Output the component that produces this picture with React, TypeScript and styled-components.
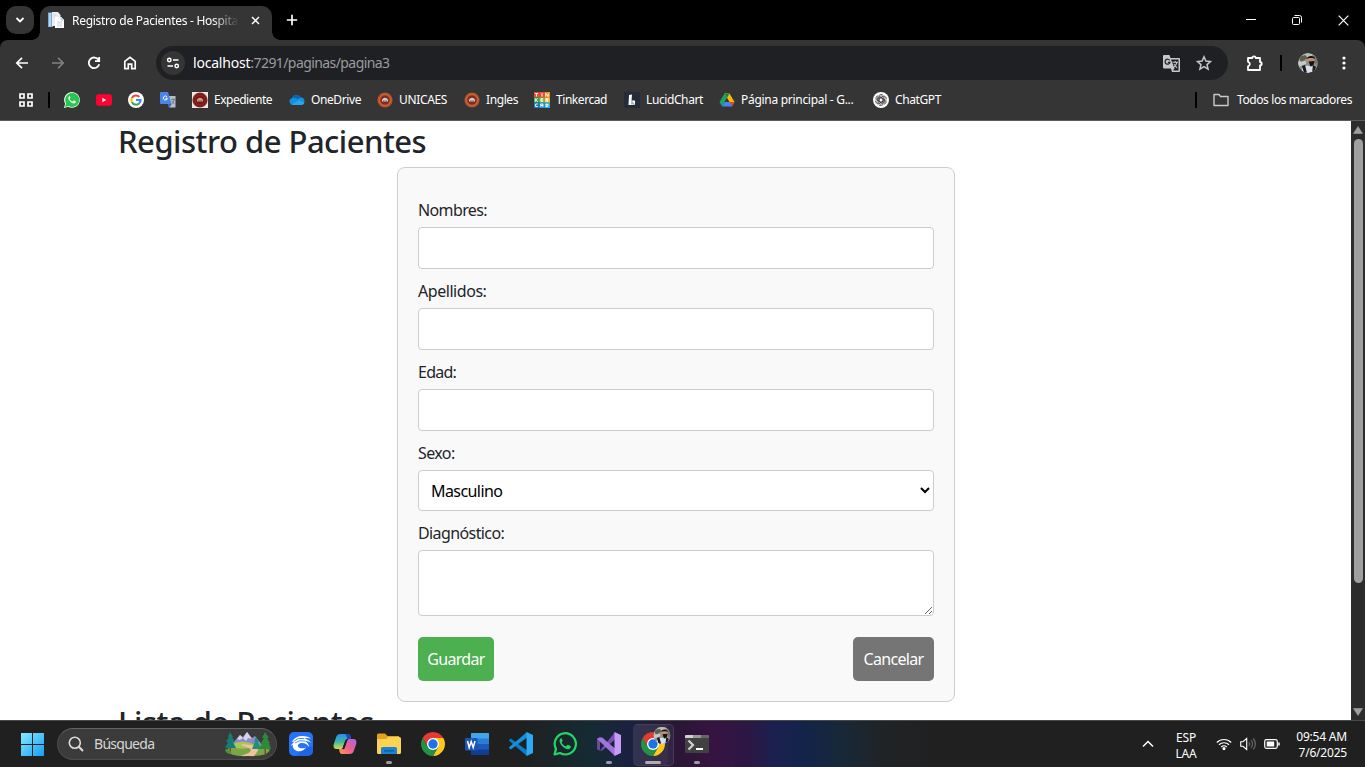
import React from 'react';
import styled, { createGlobalStyle, css } from 'styled-components';

const Global = createGlobalStyle`
  * { box-sizing: border-box; }
  body { margin: 0; background: #fff; overflow: hidden; font-family: 'Noto Sans', 'Open Sans', sans-serif; }
  svg { display: block; flex: none; }
`;

const Screen = styled.div`
  width: 1365px; height: 767px; display: flex; flex-direction: column; overflow: hidden;
`;

/* ---------- browser frame ---------- */
const TabStrip = styled.header`
  height: 40px; flex: none; background: #000; display: flex; align-items: flex-start; padding: 6px 0 0 6px;
`;
const TabSearch = styled.button`
  width: 28px; height: 28px; border: 0; padding: 0; border-radius: 10px; background: #353535;
  display: flex; align-items: center; justify-content: center;
`;
const Tab = styled.div`
  position: relative; width: 232px; height: 34px; margin-left: 6px; padding: 0 10px 6px 8px;
  border-radius: 10px 10px 0 0; background: #353535; display: flex; align-items: center;
  &::before, &::after {
    content: ''; position: absolute; bottom: 0; width: 8px; height: 8px;
  }
  &::before { left: -8px; background: radial-gradient(circle at 0 0, transparent 7.5px, #353535 8px); }
  &::after { right: -8px; background: radial-gradient(circle at 100% 0, transparent 7.5px, #353535 8px); }
`;
const TabTitle = styled.span`
  width: 167px; margin: 0 12px 0 8px; overflow: hidden; white-space: nowrap; color: #fff;
  font-size: 12px; line-height: 16px; letter-spacing: -0.28px; padding-top: 1px;
  mask-image: linear-gradient(90deg, #000 84%, transparent 100%);
`;
const NewTab = styled.div`
  width: 28px; height: 28px; margin-left: 6px; display: flex; align-items: center; justify-content: center;
`;
const WindowButtons = styled.div`
  margin-left: auto; display: flex; margin-right: -1px;
`;
const WindowButton = styled.div`
  width: 46px; height: 28px; display: flex; align-items: center; justify-content: center;
`;
const ToolbarBack = styled.div`background: #000; flex: none;`;
const Chrome = styled.div`
  height: 81px; background: #353535; border-radius: 8px 8px 0 0; border-bottom: 1px solid #5c5c5c;
  display: flex; flex-direction: column;
`;
const Toolbar = styled.div`
  height: 46px; flex: none; padding: 0 0 0 4px; display: flex; align-items: center;
`;
const ToolButton = styled.div<{ $w?: number; $gap?: number }>`
  width: ${p => p.$w ?? 36}px; height: 34px; flex: none; margin-left: ${p => p.$gap ?? 0}px;
  display: flex; align-items: center; justify-content: center;
`;
const AddressBar = styled.div`
  width: 1072px; height: 34px; margin-left: 8px; flex: none; border-radius: 17px; background: #1f2024;
  display: flex; align-items: center; padding: 0 16px 0 5px;
`;
const SiteInfo = styled.div`
  width: 24px; height: 24px; border-radius: 50%; background: #353535; display: flex; align-items: center; justify-content: center;
`;
const Url = styled.div`
  margin-left: 8px; flex: 1; font-size: 14px; line-height: 20px; color: #9a9b9d; letter-spacing: -0.58px;
  b { color: #fff; font-weight: 400; letter-spacing: -0.2px; }
`;
const AddressIcon = styled.div`margin-left: 16px;`;
const Divider = styled.div<{ $m: string }>`width: 2px; height: 16px; background: #000; margin: ${p => p.$m}; flex: none;`;
const Avatar = styled.div`width: 20px; height: 20px; flex: none; border-radius: 50%; overflow: hidden;`;

const Bookmarks = styled.nav`
  height: 28px; margin: 0; padding: 0 13px 0 18px; display: flex; align-items: center;
`;
const Bookmark = styled.div<{ $w: number }>`
  width: ${p => p.$w}px; height: 16px; flex: none; display: flex; align-items: center; gap: 6px;
`;
const BookmarkText = styled.span<{ $ls?: number }>`
  color: #fff; font-size: 12px; line-height: 16px; white-space: nowrap; letter-spacing: ${p => p.$ls ?? -0.4}px;
`;
const AllBookmarks = styled.div`display: flex; align-items: center; gap: 8px; margin-left: auto;`;

/* ---------- page ---------- */
const Viewport = styled.main`height: 599px; flex: none; display: flex; overflow: hidden; background: #fff;`;
const Content = styled.div`width: 1351px; flex: none; padding-left: 118px; overflow: hidden;`;
const Heading = styled.h2`
  margin: 0; height: 46px; padding-top: 1px; font-size: 31px; line-height: 38px; font-weight: 500; color: #212529;
  letter-spacing: -0.5px; white-space: nowrap;
`;
const FormCard = styled.form`
  width: 558px; height: 535px; margin-left: 279px; padding: 20px; border: 1px solid #ccc; border-radius: 8px;
  background: #f9f9f9; display: flex; flex-direction: column;
`;
const Label = styled.label<{ $ls?: number }>`
  margin: 10px 0 5px; font-size: 16px; line-height: 24px; color: #212529; letter-spacing: ${p => p.$ls ?? -0.6}px;
`;
const field = css`
  width: 100%; flex: none; margin: 0; border: 1px solid #ccc; border-radius: 4px; background: #fff; color: #000;
  font: 16px/24px 'Noto Sans', sans-serif; outline: none;
`;
const Input = styled.input`${field} height: 42px; padding: 8px;`;
const Select = styled.select`${field} height: 41px; padding: 8px; letter-spacing: -0.57px;`;
const TextArea = styled.textarea`${field} height: 66px; padding: 8px;`;
const Actions = styled.div`display: flex; justify-content: space-between; margin-top: 21px;`;
const Action = styled.button<{ $w: number; $bg: string }>`
  width: ${p => p.$w}px; height: 44px; border: 0; border-radius: 5px; padding: 0; color: #fff; background: ${p => p.$bg};
  font: 16px/24px 'Noto Sans', sans-serif; letter-spacing: -0.68px;
`;
const Scrollbar = styled.div`
  width: 14px; background: #2c2c2c; display: flex; flex-direction: column; align-items: center; padding: 5px 0 4px;
`;
const Thumb = styled.div`width: 9px; height: 444px; margin: 5px 0 auto; border-radius: 5px; background: #9f9f9f;`;

/* ---------- taskbar ---------- */
const Taskbar = styled.footer`
  height: 47px; flex: none; border-top: 1px solid #484848; display: flex; align-items: center; padding: 0 18px 0 21px;
  background: linear-gradient(90deg, #202020 520px, #152b33 592px, #1b2140 628px, #2c1536 682px, #371341 712px,
    #2c1745 750px, #1b2150 775px, #13244a 806px, #182838 842px, #202427 880px, #202020 930px);
`;
const SearchBox = styled.div`
  width: 220px; height: 32px; margin: 0 2px 0 13px; border: 1px solid #4c4c4c; border-top-color: #626262; border-radius: 16px; background: #3b3b3b;
  display: flex; align-items: center; padding: 0 5px 0 10px; color: #d6d6d6;
  font-size: 14px; line-height: 20px; letter-spacing: -0.72px;
`;
const SearchText = styled.div`width: 70px; margin: 0 auto 1px 10px;`;
const TaskButton = styled.div<{ $active?: boolean }>`
  position: relative; width: 44px; height: 46px; flex: none; display: flex; align-items: center; justify-content: center;
  ${p => p.$active && css`
    &::before {
      content: ''; position: absolute; left: 2px; top: 3px; width: 40px; height: 40px; border-radius: 5px;
      background: rgba(255,255,255,.09); border: 1px solid rgba(255,255,255,.07); border-left: 0;
      box-shadow: inset -6px 0 0 -1px rgba(32,20,60,.35);
    }
  `}
  svg { position: relative; }
`;
const RunMark = styled.i<{ $wide?: boolean }>`
  position: absolute; bottom: 3px; left: ${p => (p.$wide ? 14 : 19)}px; width: ${p => (p.$wide ? 16 : 6)}px; height: 3px;
  border-radius: 2px; background: ${p => (p.$wide ? '#b0acae' : '#9b9b9f')};
`;
const Tray = styled.div`
  margin-left: auto; display: flex; align-items: center; color: #fff; font-size: 12px; line-height: 16px; letter-spacing: -0.2px;
`;
const Lang = styled.div`width: 24px; margin: 0 18px 0 20px; text-align: center; padding-top: 3px;`;
const TrayIcons = styled.div`display: flex; gap: 8px;`;
const Clock = styled.div`width: 67px; text-align: right; white-space: nowrap; padding-top: 1px;`;

/* ---------- icons ---------- */
const s = { fill: 'none', stroke: '#fff' } as const;

const WhatsApp = ({ size = 16, filled = false }: { size?: number; filled?: boolean }) => (
  <svg width={size} height={size} viewBox="0 0 24 24">
    {filled && <path d="M0 24l1.700-6.200A11.800 11.800 0 1 1 6.300 22.300z" fill="#fff" />}
    <path d="M1.500 22.500l1.500-5.600A10.600 10.600 0 1 1 7 21z" fill={filled ? '#25c84f' : 'none'} stroke={filled ? 'none' : '#25d366'} strokeWidth="2.200" strokeLinejoin="round" />
    <path d="M8.300 6.300c-.5 0-1.800 1-1.800 2.800 0 2 1.700 4.200 3.400 5.700 1.700 1.400 3.800 2.500 5.300 2.400 1.500-.1 2.500-1 2.600-2.400 0-.5 0-.7-.4-.9l-2.300-1.100c-.5-.2-.7 0-1 .4l-.7.9c-.2.3-.5.3-.9.1-1.600-.7-2.900-1.900-3.800-3.500-.2-.4 0-.6.2-.8.6-.6.9-1 .7-1.500l-.8-1.900c-.1-.2-.3-.2-.5-.2z" fill={filled ? '#fff' : '#25d366'} />
  </svg>
);
const ChromeLogo = ({ children }: { children?: React.ReactNode }) => (
  <svg width="24" height="24" viewBox="0 0 24 24" overflow="visible">
    <path d="M1.610 6A12 12 0 0 1 22.390 6H12L6.800 15z" fill="#e33b2e" />
    <path d="M22.390 6A12 12 0 0 1 12 24l5.200-9L12 6z" fill="#fdc921" />
    <path d="M1.610 6A12 12 0 0 0 12 24l5.200-9H6.800z" fill="#229342" />
    <circle cx="12" cy="12" r="6" fill="#fff" /><circle cx="12" cy="12" r="4.700" fill="#1a73e8" />
    {children}
  </svg>
);
const Crest = ({ boxed = false }) => (
  <svg width="16" height="16" viewBox="0 0 16 16">
    {boxed && <rect width="16" height="16" fill="#eee6e2" />}
    <circle cx="8" cy="8" r="7.600" fill={boxed ? '#8d2a20' : '#b9512c'} />
    <circle cx="8" cy="8" r="5.800" fill="none" stroke={boxed ? '#5d1714' : '#c96f3a'} strokeWidth=".7" />
    <circle cx="8" cy="8" r="4.600" fill={boxed ? '#7a1717' : '#7e2c26'} />
    <path d="M5 9.500V7.800Q5.500 6 8 5.700q2.500.3 3 2.100v1.700z" fill={boxed ? '#d9a59b' : '#d9d4d6'} />
    <path d="M6.500 9.500V8M8 9.500V7.500M9.500 9.500V8" stroke="#7a3a35" strokeWidth=".6" />
  </svg>
);
const Photo = ({ size = 20 }) => (
  <svg width={size} height={size} viewBox="0 0 20 20">
    <clipPath id="face"><circle cx="10" cy="10" r="10" /></clipPath>
    <g clipPath="url(#face)">
      <rect width="20" height="20" fill="#8d938a" />
      <path d="M0 0h20v5L9 6 0 10z" fill="#b9bdb4" /><path d="M0 4l7-2 3 3-7 4z" fill="#59604f" />
      <path d="M14 2l6 2v9l-5-4z" fill="#72776c" /><path d="M0 9l8-1v3l-8 3z" fill="#c9c8c6" />
      <path d="M3 20c1-6 4-8 8-7l6 1 2 6z" fill="#dcdeeb" />
      <path d="M4 13l3-1 2 8H6zM15 12l3 2-2 6h-2z" fill="#191b25" />
      <circle cx="13" cy="7" r="3.700" fill="#c58d6d" /><path d="M9 6c0-4 8-4 8 0l-2-1-4 0z" fill="#0f1014" />
      <path d="M10.500 8.500l6-.5-1 4-3 1.500z" fill="#111218" />
    </g>
  </svg>
);
const Landscape = () => (
  <svg width="46" height="26" viewBox="0 0 46 26">
    <path d="M6 14L15 4l3 2 4-5 5 6 3-2 8 10z" fill="#8f8ac6" /><path d="M12 8l3-4 3 3 4-6 5 7-4-1-2 3-3-3-3 2z" fill="#d5d3ee" />
    <path d="M1 20q7-9 19-7 13-3 25 6-4 7-22 6Q6 26 1 20z" fill="#7ba646" />
    <path d="M8 13q10-5 22 1-5 5-19 3z" fill="#a9c65a" />
    <path d="M15 25c8-2 14-5 9-8-3-2-8-2-7-4 9 1 17 2 16 6-1 3-3 4-4 6z" fill="#f3c19c" />
    <path d="M5 1l3 5H7l3 5H8l3 6H0l3-6H1l3-5H3z" fill="#167c75" /><path d="M4.500 17h1.500v5H4.500z" fill="#7d4a2e" />
    <path d="M31 6l3 5h-1l3 7h-9l3-7h-1z" fill="#1d8f80" />
    <path d="M40 1l4 6h-2l3 5h-1l2 6H34l3-6h-1l3-5h-2z" fill="#2e8a3b" /><path d="M39.500 18H41v6h-1.500z" fill="#7d4a2e" />
    <path d="M0 19q2-2 3 0t3 1v3q-5 0-6-4z" fill="#4c8f3c" />
  </svg>
);
const Translate = () => (
  <svg width="16" height="16" viewBox="0 0 16 16">
    <path d="M6 4h9.500v11.500H9z" fill="#b9bcc2" /><path d="M1 0h7l3.500 12H1a1 1 0 0 1-1-1V1a1 1 0 0 1 1-1z" fill="#4a84e8" />
    <path d="M7.500 12h4l-2 3.500z" fill="#3565c9" />
    <path d="M6.900 4.800A2 2 0 1 0 7.300 6.300H5.500" fill="none" stroke="#fff" strokeWidth="1" />
    <path d="M11 7.500h4M13 6.500v1M14.300 7.500q-.7 3-3 4.500M11.800 9l2.500 3" fill="none" stroke="#687080" strokeWidth=".8" />
  </svg>
);
const Tinkercad = () => (
  <svg width="16" height="16" viewBox="0 0 16 16">
    {['#ef4b3a', '#ef4b3a', '#f58a2c', '#38a852', '#8bc34a', '#f7b52b', '#1979b8', '#2196d6', '#28b3e3'].map((c, i) => (
      <rect key={i} x={(i % 3) * 5.33} y={Math.floor(i / 3) * 5.33} width="5.400" height="5.400" fill={c} />
    ))}
    <path d="M1 1.500h3M2.500 1.500v3M8 1v3.500M11.700 4.500v-3l2.500 3v-3M1.300 6.300v3.500M3.700 6.300L1.800 8l2 1.800M9 6.800H7v2.500h2M7 8h1.700M12 9.800V6.700h2v1.500h-2l2 1.600M3.800 12H1.600v2.500h2.200M6.700 14.800V12h2.200v2.800M7 13.500h2M12 12v2.600l2-.6v-1.500z" fill="none" stroke="#fff" strokeWidth=".9" />
  </svg>
);
const ChatGPT = () => (
  <svg width="16" height="16" viewBox="0 0 16 16">
    <circle cx="8" cy="8" r="8" fill="#fff" />
    <g fill="none" stroke="#333" strokeWidth=".75">
      {[0, 60, 120, 180, 240, 300].map(a => <path key={a} transform={`rotate(${a} 8 8)`} d="M5.700 9V4.800a2.500 2.500 0 0 1 4.500-1.400M6 7l3.600-2.200 2.600 1.400" />)}
    </g>
  </svg>
);
const GoogleG = () => (
  <svg width="16" height="16" viewBox="0 0 16 16">
    <circle cx="8" cy="8" r="8" fill="#fff" />
    <g fill="none" strokeWidth="2.100">
      <path d="M11.300 4.900A4.600 4.600 0 0 0 3.900 5.900" stroke="#ea4335" /><path d="M3.900 5.900a4.600 4.600 0 0 0 0 4.200" stroke="#fbbc05" />
      <path d="M3.900 10.100a4.600 4.600 0 0 0 7.200 1.400" stroke="#34a853" /><path d="M11.100 11.500A4.500 4.500 0 0 0 12.600 8H8" stroke="#4285f4" />
    </g>
  </svg>
);
const VisualStudio = () => (
  <svg width="24" height="24" viewBox="0 0 24 24">
    <path d="M0 6.800L3 5.200v13.600L0 17.200z" fill="#71479d" /><path d="M3 18.800L18 0v7.500L5.500 18.200z" fill="#7b4fb5" />
    <path d="M0 6.800L3 5.200l2.500.6L18 16.500V24L0 6.800z" fill="#a074dd" />
    <path d="M17.500 0L24 3v18l-6.500 3z" fill="#c79bf7" />
  </svg>
);

const tasks: { id: string; run?: boolean; active?: boolean; icon: React.ReactNode }[] = [
  { id: 'bird', icon: (
    <svg width="24" height="24" viewBox="0 0 24 24">
      <rect width="24" height="24" rx="5" fill="#2673f5" /><path d="M7 24l7-7 10-3v5a5 5 0 0 1-5 5z" fill="#1557d4" opacity=".5" />
      <path d="M3 9.500C7 3.500 15 2.500 22 6.500c-3-.7-5-.7-7 0 3 .5 5.500 2 7 4.500-2-1.500-4-2-6-2 2.500 1.500 4 3.500 4 6-2-3-4.500-4.500-8-4-3 .5-4 3-2 4.500 2 1.300 4.500 1 7 0-2 3.500-7.500 5-11 2.500-2-1.500-2.700-3.500-2-5.500L2 14c.3-1.500 1.300-2.700 3-3.300z" fill="#fff" />
      <path d="M4.500 9.500Q9 5 15 6.500M6 11q4-3.500 10-2" stroke="#2673f5" strokeWidth=".8" fill="none" />
    </svg>) },
  { id: 'copilot', icon: (
    <svg width="24" height="24" viewBox="0 0 24 24">
      <defs>
        <linearGradient id="cpA" x1="0" y1="0" x2="0" y2="1"><stop stopColor="#2b8df0" /><stop offset=".5" stopColor="#3bb5a8" /><stop offset="1" stopColor="#d6d84a" /></linearGradient>
        <linearGradient id="cpB" x1="1" y1="0" x2="0" y2="1"><stop stopColor="#a663ea" /><stop offset=".5" stopColor="#ee5d92" /><stop offset="1" stopColor="#fb9b4f" /></linearGradient>
      </defs>
      <path d="M7.500 2H15c1.500 0 2 .8 2.500 2.500L18 7h-3c-2 0-2.600 1-3 2.500L10 15c-.5 1.500-1 2-2.500 2H4c-3 0-4-2-3.200-5l2.400-7C4 3 5 2 7.500 2z" fill="url(#cpA)" />
      <path d="M16.500 22H9c-1.500 0-2-.8-2.500-2.500L6 17h3c2 0 2.600-1 3-2.500L14 9c.5-1.500 1-2 2.500-2H20c3 0 4 2 3.200 5l-2.400 7c-.8 2-1.800 3-4.300 3z" fill="url(#cpB)" />
      <path d="M12.500 2H15c1.500 0 2 .8 2.500 2.500L18 7h-3.500z" fill="#1948b8" />
      <path d="M12 9.500C12.500 8 13 7 15 7h1.500C15 7 14.500 7.500 14 9l-2.500 7.500c-.5 1-1.500.5-2.500.5.700-.3.800-1 1-2z" fill="#202020" />
    </svg>) },
  { id: 'files', run: true, icon: (
    <svg width="24" height="24" viewBox="0 0 24 24">
      <path d="M0 3a1.500 1.500 0 0 1 1.500-1.500H8L10.500 4H22v4H0z" fill="#e4a11b" />
      <path d="M0 7h9l2-2h11.500A1.500 1.500 0 0 1 24 6.500v14a1.500 1.500 0 0 1-1.500 1.500h-21A1.500 1.500 0 0 1 0 20.500z" fill="#fcd354" />
      <path d="M4 22v-5.500A1.500 1.500 0 0 1 5.500 15h13a1.500 1.500 0 0 1 1.500 1.500V22z" fill="#1b83d4" /><path d="M7 18h10v1.500H7z" fill="#0d5ca6" />
    </svg>) },
  { id: 'chrome', icon: <ChromeLogo /> },
  { id: 'word', icon: (
    <svg width="24" height="24" viewBox="0 0 24 24">
      <rect x="6" y="1" width="18" height="22" rx="1" fill="#185abd" /><path d="M6 2a1 1 0 0 1 1-1h16a1 1 0 0 1 1 1v5H6z" fill="#41a5ee" />
      <path d="M6 6.500h18V12H6z" fill="#2b7cd3" /><path d="M6 17.500h18V22a1 1 0 0 1-1 1H7a1 1 0 0 1-1-1z" fill="#103f91" />
      <rect y="6" width="12.500" height="12.500" rx="1" fill="#1c54b5" /><path d="M2.500 9l1.700 6.500L6.200 9.500l2 6L10 9" fill="none" stroke="#fff" strokeWidth="1.500" />
    </svg>) },
  { id: 'code', icon: (
    <svg width="24" height="24" viewBox="0 0 24 24">
      <path d="M0 8l1.800-1.500L18 18.500V24L.3 9z" fill="#0a7cc9" /><path d="M0 16l1.800 1.500L18 5.500V0L.3 15z" fill="#1490dd" />
      <path d="M17.500 0L24 3v18l-6.500 3z" fill="#2daaf4" />
    </svg>) },
  { id: 'whatsapp', icon: <WhatsApp size={24} /> },
  { id: 'vs', run: true, icon: <VisualStudio /> },
  { id: 'chrome-profile', run: true, active: true, icon: <ChromeLogo><g transform="translate(12.500 -5)"><Photo size={17} /></g></ChromeLogo> },
  { id: 'terminal', run: true, icon: (
    <svg width="24" height="24" viewBox="0 0 24 24">
      <rect y="3" width="24" height="18" rx="1" fill="#414141" /><path d="M0 6V4a1 1 0 0 1 1-1h7v3z" fill="#d0d0d0" /><path d="M8 3h8v3H8z" fill="#999" /><path d="M16 3h7a1 1 0 0 1 1 1v2h-8z" fill="#666" />
      <path d="M3.500 8.500l4.500 4.500-4.500 4.500" fill="none" stroke="#d0d0d0" strokeWidth="2.200" /><path d="M11 17h7" stroke="#fff" strokeWidth="2" />
    </svg>) },
];

const bookmarks: { w: number; text?: string; ls?: number; icon: React.ReactNode }[] = [
  { w: 32, icon: <WhatsApp filled /> },
  { w: 32, icon: <svg width="16" height="16" viewBox="0 0 16 16"><rect y="2.300" width="16" height="11.400" rx="3" fill="#ff0033" /><path d="M6.300 5.800v4.400L10.200 8z" fill="#fff" /></svg> },
  { w: 32, icon: <GoogleG /> },
  { w: 32, icon: <Translate /> },
  { w: 97, text: 'Expediente', ls: -0.49, icon: <Crest boxed /> },
  { w: 88, text: 'OneDrive', icon: <svg width="16" height="16" viewBox="0 0 16 16"><path d="M3.500 13a3.500 3.500 0 0 1-.6-6.800A5 5 0 0 1 12 5.500 3.800 3.800 0 0 1 12.500 13z" fill="#1490df" /><path d="M3 6.200a5 5 0 0 1 9-.7q-2 0-3.200 1.700Q6 5.500 3 6.200z" fill="#0a64b8" /><path d="M2.500 12.500L10 8.300l5.500 2.200q-.5 2.300-3 2.500h-9z" fill="#28a8ea" /></svg> },
  { w: 87, text: 'UNICAES', ls: -0.35, icon: <Crest /> },
  { w: 70, text: 'Ingles', icon: <Crest /> },
  { w: 90, text: 'Tinkercad', ls: -0.44, icon: <Tinkercad /> },
  { w: 95, text: 'LucidChart', icon: <svg width="16" height="16" viewBox="0 0 16 16"><rect width="16" height="16" fill="#252c38" /><path d="M5 3l3-.5-.5 6L11 8.500v4.300L4.500 13z" fill="#fff" /><path d="M7.500 8.500l3.500 4-4-.5z" fill="#aab" /></svg> },
  { w: 154, text: 'Página principal - G...', ls: -0.29, icon: <svg width="16" height="16" viewBox="0 0 16 16"><path d="M5.500 1.500h5L5.500 10 3 14.500.5 10z" fill="#1ea362" /><path d="M5.500 1.500h5l5 8.500h-5z" fill="#ffba00" /><path d="M5.500 1.500h5L8 6z" fill="#118549" /><path d="M5.500 10h10L13 14.500H3z" fill="#4285f4" /><path d="M10.500 10h5L13 14.500z" fill="#e34133" /></svg> },
  { w: 70, text: 'ChatGPT', icon: <ChatGPT /> },
];

const fields: [string, number][] = [['Nombres:', -0.62], ['Apellidos:', -0.45], ['Edad:', -0.75]];

export default function App() {
  return (
    <Screen>
      <Global />
      <TabStrip>
        <TabSearch><svg width="10" height="8" viewBox="0 0 10 8" {...s} strokeWidth="1.800"><path d="M1.500 2L5 5.500 8.500 2" /></svg></TabSearch>
        <Tab>
          <svg width="16" height="16" viewBox="0 0 16 16"><path d="M0 .5h5v14.500H0z" fill="#78acd8" /><path d="M1 1h2v13.500H1z" fill="#b4d5ee" /><path d="M4 0h6l2.500 3v11H4z" fill="#e9eef3" /><path d="M7 5h6l3 3v8H7z" fill="#fff" /><path d="M13 5v3h3zM5.500 3h3M5.500 5h1.500M9 10h5M9 12h5M9 14h5" stroke="#bdc9d4" strokeWidth=".8" fill="#cfd9e2" /></svg>
          <TabTitle>Registro de Pacientes - Hospital</TabTitle>
          <svg width="9" height="9" viewBox="0 0 9 9" {...s} strokeWidth="1.500"><path d="M1 1l7 7M8 1L1 8" /></svg>
        </Tab>
        <NewTab><svg width="12" height="12" viewBox="0 0 12 12" {...s} strokeWidth="1.700"><path d="M6 .8v10.400M.8 6h10.400" /></svg></NewTab>
        <WindowButtons>
          <WindowButton><svg width="10" height="10" viewBox="0 0 10 10" {...s}><path d="M0 4.500h10" /></svg></WindowButton>
          <WindowButton><svg width="10" height="10" viewBox="0 0 10 10" {...s}><rect x=".5" y="2.500" width="7" height="7" rx="1" /><path d="M2.500.5h5a2 2 0 0 1 2 2v5" /></svg></WindowButton>
          <WindowButton><svg width="11" height="11" viewBox="0 0 11 11" {...s} strokeWidth="1.200"><path d="M.7.7l9.600 9.600M10.300.7L.7 10.300" /></svg></WindowButton>
        </WindowButtons>
      </TabStrip>
      <ToolbarBack>
        <Chrome>
          <Toolbar>
            <ToolButton><svg width="16" height="16" viewBox="0 0 16 16" {...s} strokeWidth="1.700"><path d="M14 8H3M8 2.800L2.800 8 8 13.200" /></svg></ToolButton>
            <ToolButton><svg width="16" height="16" viewBox="0 0 16 16" fill="none" stroke="#828282" strokeWidth="1.600"><path d="M2 8h11M8 2.800L13.200 8 8 13.200" /></svg></ToolButton>
            <ToolButton><svg width="16" height="16" viewBox="0 0 16 16" {...s} strokeWidth="1.800"><path d="M12.600 5A5.300 5.300 0 1 0 13.200 9.300M13.200 2v4.200H9" /></svg></ToolButton>
            <ToolButton><svg width="16" height="16" viewBox="0 0 16 16" {...s} strokeWidth="1.700"><path d="M2.800 6.300L8 2.300l5.200 4v7.400H9.700V9.200H6.300v4.500H2.800z" /></svg></ToolButton>
            <AddressBar>
              <SiteInfo><svg width="14" height="14" viewBox="0 0 14 14" {...s} strokeWidth="1.500"><circle cx="3.300" cy="4" r="1.700" /><path d="M7 4h5.500M1.500 10H7" /><circle cx="10.700" cy="10" r="1.700" /></svg></SiteInfo>
              <Url><b>localhost</b>:7291/paginas/pagina3</Url>
              <AddressIcon><svg width="17" height="17" viewBox="0 0 17 17"><path d="M1 0h5.500l1 3H16a1 1 0 0 1 1 1v12a1 1 0 0 1-1 1H9l-1-3.500H1a1 1 0 0 1-1-1V1a1 1 0 0 1 1-1z" fill="#c7c7c7" /><path d="M8 4.500h7.500v11H10l1.500-2z" fill="#1f2024" /><path d="M6.700 5.400A2.500 2.500 0 1 0 7 7.300H4.800" fill="none" stroke="#1f2024" strokeWidth="1.200" /><path d="M9.500 7.200H15M12.200 6v1.200M14 7.200q-.7 3.300-3.200 5M11 9l3 4" fill="none" stroke="#c7c7c7" strokeWidth="1.100" /></svg></AddressIcon>
              <AddressIcon><svg width="16" height="16" viewBox="0 0 16 16" fill="none" stroke="#c7c7c7" strokeWidth="1.500"><path d="M8 1.800l1.900 4.300 4.600.4-3.500 3.100 1.100 4.600L8 11.700l-4.100 2.500L5 9.600 1.500 6.500l4.600-.4z" /></svg></AddressIcon>
            </AddressBar>
            <ToolButton $w={54}><svg width="18" height="18" viewBox="0 0 18 18" {...s} strokeWidth="1.800" strokeLinejoin="round"><path d="M2 4h4.300a1.700 1.700 0 0 1 3.400 0H14v4a1.700 1.700 0 0 1 0 3.400V16H2v-3.700a2.300 2.300 0 0 0 0-4.500z" /></svg></ToolButton>
            <Divider $m="0 16px 0 -2px" />
            <Avatar><Photo /></Avatar>
            <ToolButton $w={40} $gap={6}><svg width="4" height="14" viewBox="0 0 4 14" fill="#fff"><circle cx="2" cy="2" r="1.600" /><circle cx="2" cy="7" r="1.600" /><circle cx="2" cy="12" r="1.600" /></svg></ToolButton>
          </Toolbar>
          <Bookmarks>
            <svg width="16" height="16" viewBox="0 0 16 16" {...s} strokeWidth="1.700"><path d="M2 2h4v4H2zM10 2h4v4h-4zM2 10h4v4H2zM10 10h4v4h-4z" /></svg>
            <Divider $m="0 14px" />
            {bookmarks.map((b, i) => (
              <Bookmark key={i} $w={b.w}>{b.icon}{b.text && <BookmarkText $ls={b.ls}>{b.text}</BookmarkText>}</Bookmark>
            ))}
            <AllBookmarks>
              <Divider $m="0 8px 0 0" />
              <svg width="16" height="14" viewBox="0 0 16 14" fill="none" stroke="#c9c9c9" strokeWidth="1.400" strokeLinejoin="round"><path d="M1 1.500h5l1.500 2H15v9H1z" /></svg>
              <BookmarkText $ls={-0.39}>Todos los marcadores</BookmarkText>
            </AllBookmarks>
          </Bookmarks>
        </Chrome>
      </ToolbarBack>

      <Viewport>
        <Content>
          <Heading>Registro de Pacientes</Heading>
          <FormCard>
            {fields.map(([f, ls]) => <React.Fragment key={f}><Label $ls={ls}>{f}</Label><Input /></React.Fragment>)}
            <Label>Sexo:</Label>
            <Select defaultValue="Masculino"><option>Masculino</option><option>Femenino</option></Select>
            <Label>Diagnóstico:</Label>
            <TextArea />
            <Actions>
              <Action type="button" $w={76} $bg="#4caf50">Guardar</Action>
              <Action type="button" $w={81} $bg="#757575">Cancelar</Action>
            </Actions>
          </FormCard>
          <Heading>Lista de Pacientes</Heading>
        </Content>
        <Scrollbar>
          <svg width="10" height="8" viewBox="0 0 10 8"><path d="M5 .5L9.500 7.500h-9z" fill="#9f9f9f" stroke="#9f9f9f" strokeWidth=".6" strokeLinejoin="round" /></svg>
          <Thumb />
          <svg width="10" height="8" viewBox="0 0 10 8"><path d="M5 7.500L.5.5h9z" fill="#9f9f9f" stroke="#9f9f9f" strokeWidth=".6" strokeLinejoin="round" /></svg>
        </Scrollbar>
      </Viewport>

      <Taskbar>
        <svg width="23" height="23" viewBox="0 0 23 23">
          <defs><linearGradient id="win" x1="0" y1="0" x2="1" y2="1"><stop stopColor="#86eafe" /><stop offset="1" stopColor="#149df5" /></linearGradient></defs>
          <path d="M0 0h11v11H0zM12 0h11v11H12zM0 12h11v11H0zM12 12h11v11H12z" fill="url(#win)" />
        </svg>
        <SearchBox>
          <svg width="16" height="16" viewBox="0 0 16 16" fill="none" stroke="#dcdcdc" strokeWidth="1.600"><circle cx="6.800" cy="6.800" r="5.500" /><path d="M10.800 10.800l4.200 4.200" strokeWidth="2" /></svg>
          <SearchText>Búsqueda</SearchText>
          <Landscape />
        </SearchBox>
        {tasks.map(t => (
          <TaskButton key={t.id} $active={t.active}>{t.icon}{t.run && <RunMark $wide={t.active} />}</TaskButton>
        ))}
        <Tray>
          <svg width="12" height="8" viewBox="0 0 12 8" {...s} strokeWidth="1.500"><path d="M1 6.500l5-5 5 5" /></svg>
          <Lang>ESP<br />LAA</Lang>
          <TrayIcons>
            <svg width="16" height="16" viewBox="0 0 16 16" {...s} strokeWidth="1.200"><path d="M.8 6.500a10.200 10.200 0 0 1 14.400 0M3 8.800a7.100 7.100 0 0 1 10 0M5.200 11a4 4 0 0 1 5.600 0" /><circle cx="8" cy="12.600" r="1" fill="#fff" /></svg>
            <svg width="16" height="16" viewBox="0 0 16 16" {...s} strokeWidth="1.100"><path d="M.7 5.700H3L6.700 2.500v11L3 10.300H.7z" /><path d="M8.800 6a3 3 0 0 1 0 4M11 4.200a5.500 5.500 0 0 1 0 7.600M13.200 2.500a8 8 0 0 1 0 11" stroke="#6d6d6d" /></svg>
            <svg width="16" height="16" viewBox="0 0 16 16" {...s} strokeWidth="1.200"><rect x=".7" y="3.600" width="12.600" height="8.800" rx="1.800" /><rect x="2.700" y="5.500" width="7.500" height="5" fill="#fff" stroke="none" /><path d="M15 6.500v3" strokeWidth="1.500" /></svg>
          </TrayIcons>
          <Clock>09:54 AM<br />7/6/2025</Clock>
        </Tray>
      </Taskbar>
    </Screen>
  );
}
